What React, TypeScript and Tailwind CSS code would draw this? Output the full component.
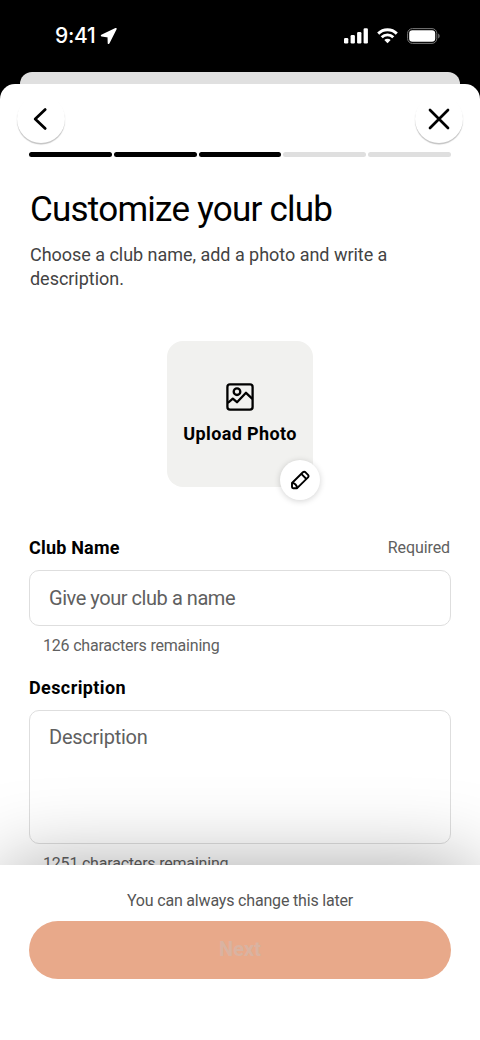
import React from 'react';

const TOTAL_STEPS = 5;
const CURRENT_STEP = 3;

const StatusBar: React.FC = () => (
  <div className="h-[72px] shrink-0 flex items-start justify-between pl-[55px] pr-[40px] pt-[22px] text-white">
    <div className="flex items-center h-7 gap-[5px]">
      <span className="font-['Inter',sans-serif] font-medium text-[21px] leading-7 tracking-[-0.3px]">9:41</span>
      <svg width="18" height="18" viewBox="0 0 18 18" fill="currentColor" stroke="currentColor" strokeWidth="1.8" strokeLinejoin="round">
        <path d="M15.8 1.9 1.700 8.600l6.700.9.2 6.600Z" />
      </svg>
    </div>
    <div className="flex items-center h-7 gap-[9px]">
      <svg width="24" height="16" viewBox="0 0 24 16" fill="currentColor">
        <rect x="0" y="10" width="4.3" height="5.5" rx="1.2" />
        <rect x="6.6" y="7" width="4.3" height="8.5" rx="1.2" />
        <rect x="13.1" y="4" width="4.3" height="11.5" rx="1.2" />
        <rect x="19.6" y="0.2" width="4.3" height="15.3" rx="1.2" />
      </svg>
      <svg width="21" height="16" viewBox="0 0 21 16" fill="none" stroke="currentColor" strokeWidth="2.9">
        <path d="M1.2 5.6a13.2 13.2 0 0 1 18.6 0" />
        <path d="M4.7 9.3a8.2 8.2 0 0 1 11.6 0" />
        <path d="M10.5 15.2 7.3 12a4.6 4.6 0 0 1 6.4 0Z" fill="currentColor" stroke="none" />
      </svg>
      <svg width="33" height="16" viewBox="0 0 33 16">
        <rect x="0.6" y="0.6" width="29.2" height="14.8" rx="4.8" fill="none" stroke="#777" />
        <rect x="2.2" y="2.2" width="26" height="11.6" rx="3.2" fill="#fff" />
        <path d="M31.2 5.6c1.900.8 1.900 4 0 4.800Z" fill="#777" />
      </svg>
    </div>
  </div>
);

const RoundButton: React.FC<{ label: string; children: React.ReactNode }> = ({ label, children }) => (
  <button
    aria-label={label}
    className="size-12 rounded-full bg-white flex items-center justify-center shadow-[0_1.5px_1px_rgba(0,0,0,0.24)]"
  >
    {children}
  </button>
);

const Progress: React.FC = () => (
  <div className="flex gap-[2px] px-[29px] mt-[9px]">
    {Array.from({ length: TOTAL_STEPS }, (_, i) => (
      <div key={i} className={`h-[5px] flex-1 rounded-full ${i < CURRENT_STEP ? 'bg-black' : 'bg-[#dfdfdf]'}`} />
    ))}
  </div>
);

const PhotoPicker: React.FC = () => (
  <div className="relative mx-auto mt-[50px] size-[146px] rounded-[16px] bg-[#f1f1ef] flex flex-col items-center">
    <svg className="mt-[42px]" width="28" height="28" viewBox="0 0 28 28" fill="none" stroke="#000" strokeWidth="2.3">
      <rect x="1.4" y="1.4" width="25.2" height="25.2" rx="2.6" />
      <circle cx="11" cy="8.7" r="3.3" />
      <path d="m1.8 20 5-4.4 4.2 3.6 9-9.4 6.4 6" strokeLinejoin="round" />
    </svg>
    <span className="mt-[9px] whitespace-nowrap font-bold text-[18px] leading-7 tracking-[0.36px]">Upload Photo</span>
    <button
      aria-label="Edit photo"
      className="absolute left-[113px] top-[119px] size-10 rounded-full bg-white flex items-center justify-center shadow-[0_1px_6px_rgba(0,0,0,0.18)]"
    >
      <svg width="20" height="20" viewBox="0 0 20 20" fill="none" stroke="#000" strokeWidth="1.9" strokeLinejoin="round">
        <path d="M2 13 12.9 2.300q1.300-1.100 2.600 0l2.500 2.500q1.100 1.300 0 2.600L7.100 18.200H3.200Q2 18.200 2 17Z" />
        <path d="m11.3 3.900 5.100 5.100M2 13c2.600-.2 5.100 2.400 5.100 5.200" />
      </svg>
    </button>
  </div>
);

export default function App() {
  return (
    <div className="h-[1040px] w-[480px] overflow-hidden bg-black flex flex-col font-['Roboto',sans-serif] text-black">
      <StatusBar />
      <div className="mx-5 h-8 shrink-0 rounded-t-[12px] bg-[#e0e0e0]" />

      <div className="relative -mt-5 flex-1 min-h-0 rounded-t-[15px] bg-white flex flex-col overflow-hidden">
        <div className="flex-1 min-h-0 overflow-hidden">
          <div className="flex justify-between px-[17px] pt-[11px]">
            <RoundButton label="Back">
              <svg className="mr-[3px]" width="16" height="24" viewBox="0 0 16 24" fill="none" stroke="#000" strokeWidth="2.8">
                <path d="M13.2 2.6 3.2 12l10 9.4" strokeLinecap="round" strokeLinejoin="round" />
              </svg>
            </RoundButton>
            <RoundButton label="Close">
              <svg width="24" height="24" viewBox="0 0 24 24" fill="none" stroke="#000" strokeWidth="2.7" strokeLinecap="round">
                <path d="m3 3 18 18M21 3 3 21" />
              </svg>
            </RoundButton>
          </div>

          <Progress />

          <div className="px-[29px]">
            <h1 className="mt-[32px] pl-px text-[35px] leading-[42px] tracking-[-0.76px]">Customize your club</h1>
            <p className="mt-[12px] pl-px text-[18px] leading-6 tracking-[-0.03px] text-[#434343]">
              Choose a club name, add a photo and write a description.
            </p>

            <PhotoPicker />

            <div className="mt-[49px] flex items-center justify-between h-6 pr-px">
              <label className="font-bold text-[18px] leading-6 tracking-[0.2px]">Club Name</label>
              <span className="text-[16px] leading-6 tracking-[-0.1px] text-[#606060]">Required</span>
            </div>
            <div className="mt-[10px] h-[56px] rounded-[10px] border border-[#dedede] px-[19px] flex items-center text-[20px] tracking-[-0.45px] text-[#606060]">
              Give your club a name
            </div>
            <p className="mt-[8px] pl-[14px] text-[16px] leading-6 tracking-[-0.2px] text-[#606060]">
              126 characters remaining
            </p>

            <label className="block mt-[18px] font-bold text-[18px] leading-6 tracking-[0.4px]">Description</label>
            <div className="mt-[10px] h-[134px] rounded-[10px] border border-[#dedede] px-[19px] pt-[12px] text-[20px] leading-7 tracking-[-0.25px] text-[#606060]">
              Description
            </div>
            <p className="mt-[8px] pl-[14px] text-[16px] leading-6 tracking-[-0.2px] text-[#606060]">
              1251 characters remaining
            </p>
          </div>
        </div>

        {/* Sticky footer, its shadow falls on the form above */}
        <div className="relative z-10 h-[175px] shrink-0">
          <div className="absolute inset-x-1 inset-y-0 shadow-[0_0_80px_rgba(0,0,0,0.34)]" />
          <div className="relative h-full bg-white px-[29px] pt-[24px]">
            <p className="text-center text-[16px] leading-6 tracking-[-0.18px] text-[#555]">
              You can always change this later
            </p>
            <button className="mt-[8px] pb-[2px] h-[58px] w-full rounded-full bg-[#e8a98a] font-bold text-[20px] text-[#d9b3a1]">
              Next
            </button>
          </div>
        </div>
      </div>
    </div>
  );
}
